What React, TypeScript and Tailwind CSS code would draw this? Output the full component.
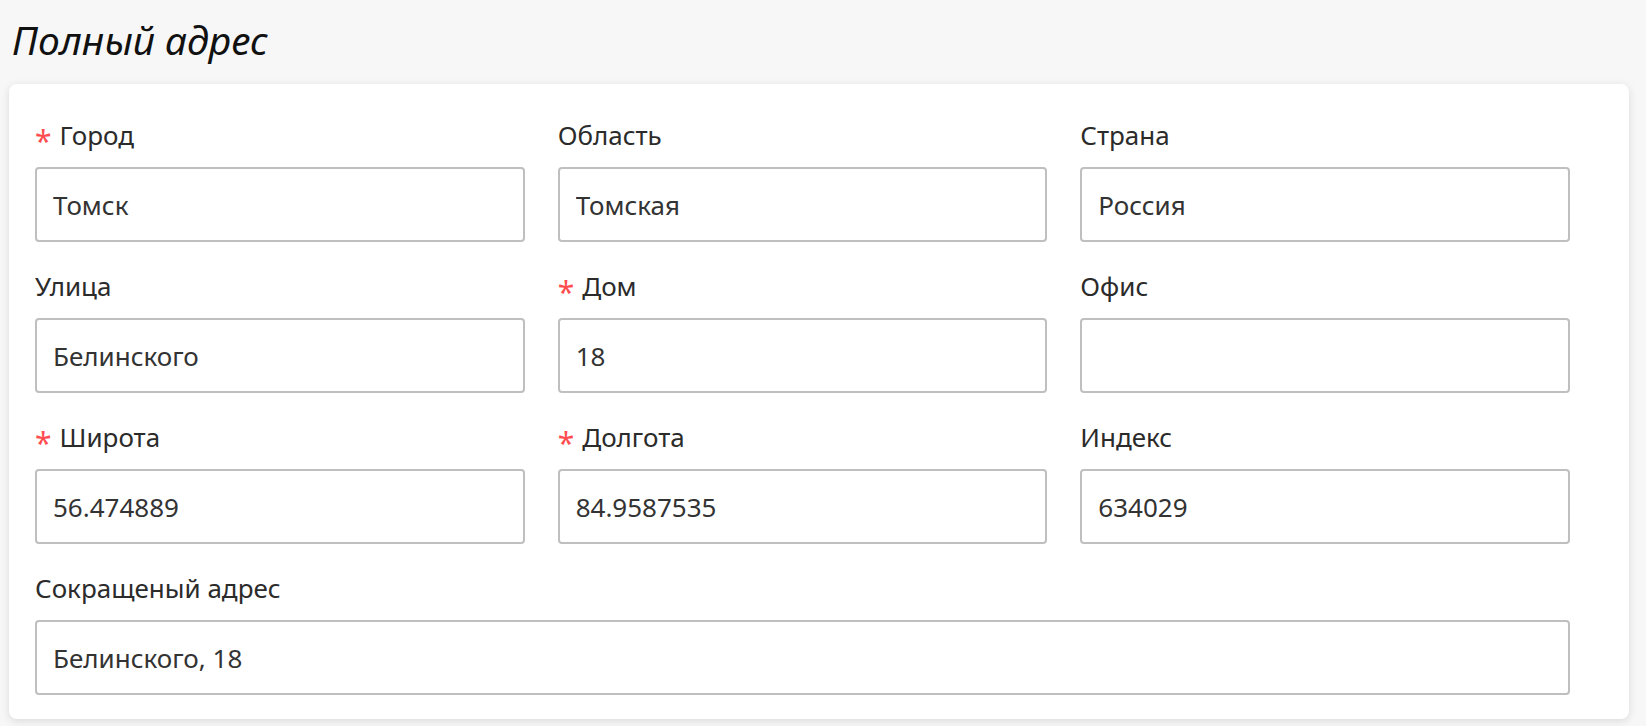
import React from 'react';

type Field = {
  label: string;
  value: string;
  required?: boolean;
  full?: boolean;
};

const fields: Field[] = [
  { label: 'Город', value: 'Томск', required: true },
  { label: 'Область', value: 'Томская' },
  { label: 'Страна', value: 'Россия' },
  { label: 'Улица', value: 'Белинского' },
  { label: 'Дом', value: '18', required: true },
  { label: 'Офис', value: '' },
  { label: 'Широта', value: '56.474889', required: true },
  { label: 'Долгота', value: '84.9587535', required: true },
  { label: 'Индекс', value: '634029' },
  { label: 'Сокращеный адрес', value: 'Белинского, 18', full: true },
];

const FormField: React.FC<{ field: Field }> = ({ field }) => (
  <div className={field.full ? 'col-span-3 pr-[33px]' : 'pr-[33px]'}>
    <label className="flex h-[32px] mb-[16px] items-center text-[26px] text-[#2b2b2b]">
      {field.required && (
        <span className="mr-[8px] text-[30px] leading-none text-[#ff4d4f] translate-y-[6px]">*</span>
      )}
      {field.label}
    </label>
    <input
      type="text"
      defaultValue={field.value}
      className="block w-full h-[75px] px-[16px] border-2 border-[#bfbfbf] rounded-[4px] bg-white text-[26px] text-[#333] outline-none"
    />
  </div>
);

export default function App() {
  return (
    <div
      className="min-h-screen bg-[#f7f7f7] pt-[14px] pl-[9px] pr-[17px]"
      style={{ fontFamily: '"Noto Sans", "Open Sans", sans-serif' }}
    >
      <h1 className="h-[52px] pl-[3px] text-[39px] leading-[52px] italic font-normal text-[#111]">
        Полный адрес
      </h1>
      <div className="mt-[18px] rounded-[8px] bg-white pt-[35px] px-[26px] pb-[24px] shadow-[0_2px_8px_rgba(0,0,0,0.12)]">
        <div className="grid grid-cols-3 gap-y-[28px]">
          {fields.map(f => (
            <FormField key={f.label} field={f} />
          ))}
        </div>
      </div>
    </div>
  );
}
